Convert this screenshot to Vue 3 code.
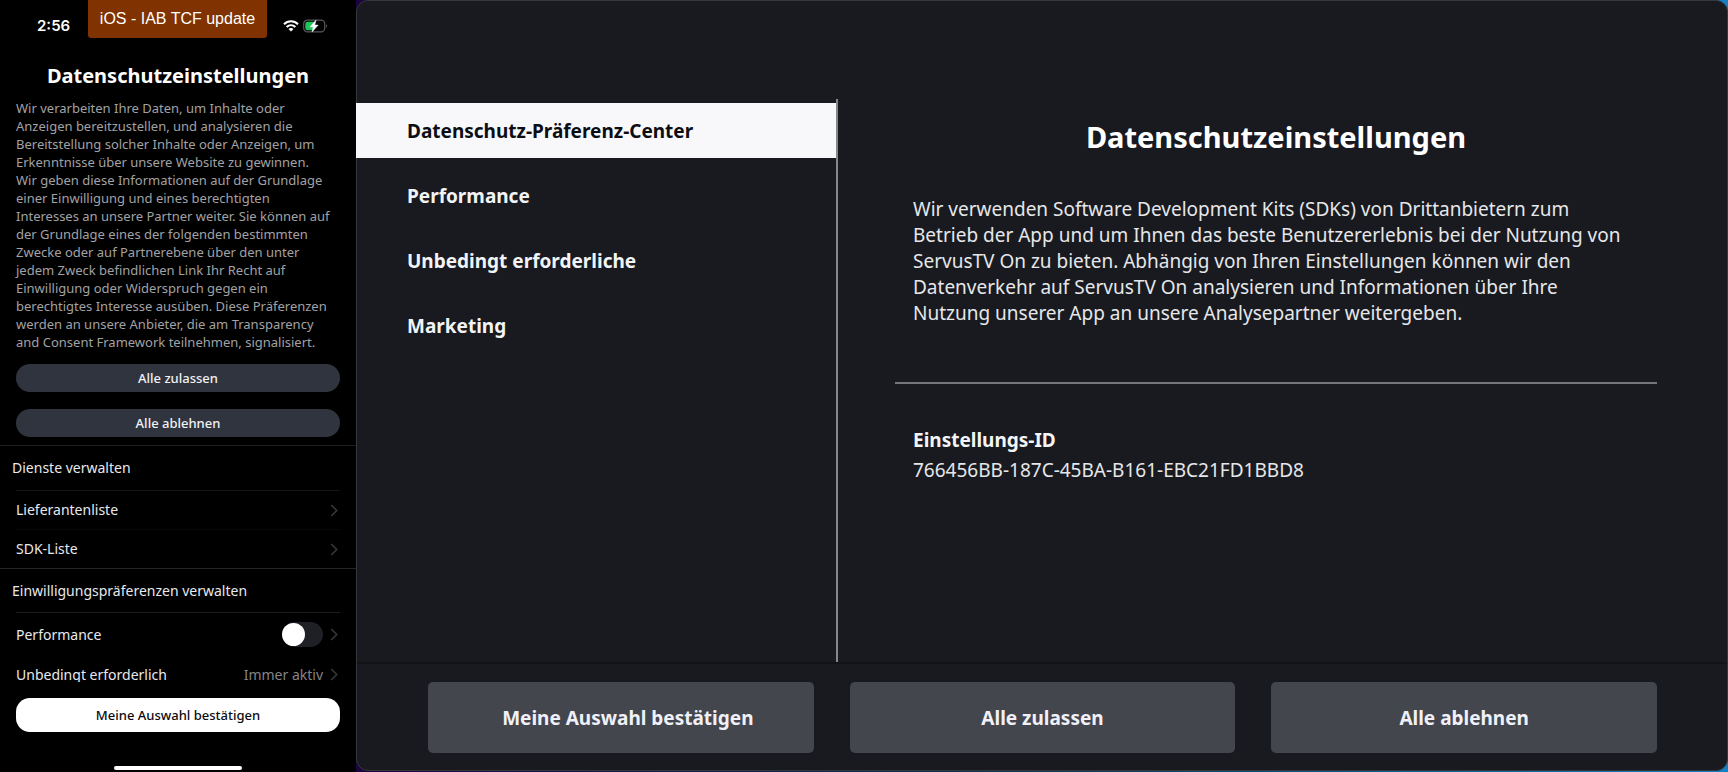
<script setup>
import { ref } from 'vue'

const phoneText = [
  'Wir verarbeiten Ihre Daten, um Inhalte oder',
  'Anzeigen bereitzustellen, und analysieren die',
  'Bereitstellung solcher Inhalte oder Anzeigen, um',
  'Erkenntnisse über unsere Website zu gewinnen.',
  'Wir geben diese Informationen auf der Grundlage',
  'einer Einwilligung und eines berechtigten',
  'Interesses an unsere Partner weiter. Sie können auf',
  'der Grundlage eines der folgenden bestimmten',
  'Zwecke oder auf Partnerebene über den unter',
  'jedem Zweck befindlichen Link Ihr Recht auf',
  'Einwilligung oder Widerspruch gegen ein',
  'berechtigtes Interesse ausüben. Diese Präferenzen',
  'werden an unsere Anbieter, die am Transparency',
  'and Consent Framework teilnehmen, signalisiert.',
]
const tvText = [
  'Wir verwenden Software Development Kits (SDKs) von Drittanbietern zum',
  'Betrieb der App und um Ihnen das beste Benutzererlebnis bei der Nutzung von',
  'ServusTV On zu bieten. Abhängig von Ihren Einstellungen können wir den',
  'Datenverkehr auf ServusTV On analysieren und Informationen über Ihre',
  'Nutzung unserer App an unsere Analysepartner weitergeben.',
]
const categories = ['Datenschutz-Präferenz-Center', 'Performance', 'Unbedingt erforderliche', 'Marketing']
const selected = ref(0)
const performance = ref(false)
</script>

<template>
  <div class="page">
    <section class="phone">
      <header class="status">
        <span class="time">2:56</span>
        <span class="badge">iOS - IAB TCF update</span>
        <span class="indicators">
          <svg width="16" height="12" viewBox="0 0 16 12" aria-hidden="true">
            <g fill="none" stroke="#fff" stroke-width="2">
              <path d="M1 4.2C5 .3 11 .3 15 4.2" />
              <path d="M3.6 7C6.2 4.5 9.800 4.500 12.400 7" />
            </g>
            <path d="M5.500 9C7 7.700 9 7.700 10.500 9L8 11.600Z" fill="#fff" />
          </svg>
          <svg width="25" height="14" viewBox="0 0 25 14" aria-hidden="true">
            <rect x=".7" y="1.200" width="21" height="11.600" rx="3.600" fill="none" stroke="#55585c" stroke-width="1.200" />
            <path d="M4.500 2.800H11V11.200H4.500Q2.300 11.200 2.300 9V5Q2.300 2.800 4.500 2.800Z" fill="#1fc55a" />
            <path d="M23 5Q25 7 23 9Z" fill="#55585c" />
            <path d="M13 1L7 7.900H10.300L9 13L15.200 6.100H11.800Z" fill="#fff" stroke="#fff" stroke-width=".5" />
          </svg>
        </span>
      </header>

      <h1 class="phone-title">Datenschutzeinstellungen</h1>
      <p class="phone-text"><span v-for="line in phoneText" :key="line" class="line">{{ line }} </span></p>
      <div class="pills">
        <button type="button" class="pill">Alle zulassen</button>
        <button type="button" class="pill">Alle ablehnen</button>
      </div>

      <div class="list">
        <h2 class="group">Dienste verwalten</h2>
        <a href="#vendors" class="row faint">
          <span>Lieferantenliste</span>
          <svg class="chevron" viewBox="0 0 8 14"><path d="M1 1L7 7L1 13" /></svg>
        </a>
        <a href="#sdks" class="row">
          <span>SDK-Liste</span>
          <svg class="chevron" viewBox="0 0 8 14"><path d="M1 1L7 7L1 13" /></svg>
        </a>
        <h2 class="group second">Einwilligungspräferenzen verwalten</h2>
        <div class="row tall">
          <label for="perf">Performance</label>
          <input id="perf" v-model="performance" type="checkbox" role="switch" class="switch" />
          <svg class="chevron" viewBox="0 0 8 14"><path d="M1 1L7 7L1 13" /></svg>
        </div>
        <div class="row cut">
          <span>Unbedingt erforderlich</span>
          <span class="state">Immer aktiv</span>
          <svg class="chevron" viewBox="0 0 8 14"><path d="M1 1L7 7L1 13" /></svg>
        </div>
      </div>

      <footer class="phone-foot">
        <button type="button" class="confirm">Meine Auswahl bestätigen</button>
        <span class="home"></span>
      </footer>
    </section>

    <div class="backdrop">
      <section class="tv">
        <div class="tv-main">
          <nav class="menu">
            <button
              v-for="(name, i) in categories"
              :key="name"
              type="button"
              :class="['item', { active: i === selected }]"
              @click="selected = i"
            >{{ name }}</button>
          </nav>
          <article class="detail">
            <h1 class="tv-title">Datenschutzeinstellungen</h1>
            <p class="tv-text"><span v-for="line in tvText" :key="line" class="line">{{ line }} </span></p>
            <hr class="rule" />
            <h2 class="id-label">Einstellungs-ID</h2>
            <p class="id">766456BB-187C-45BA-B161-EBC21FD1BBD8</p>
          </article>
        </div>
        <footer class="actions">
          <button type="button" class="action first">Meine Auswahl bestätigen</button>
          <button type="button" class="action">Alle zulassen</button>
          <button type="button" class="action">Alle ablehnen</button>
        </footer>
      </section>
    </div>
  </div>
</template>

<style>
body {
  margin: 0;
  background: #000;
}
</style>

<style scoped>
.page {
  display: grid;
  grid-template-columns: 356px minmax(0, 1fr);
  min-height: 100vh;
  font-family: "Noto Sans", "Open Sans", sans-serif;
}
.page *,
.page {
  box-sizing: border-box;
}
h1,
h2,
p {
  margin: 0;
}
button {
  border: 0;
  font-family: inherit;
  cursor: pointer;
}
.line {
  display: block;
  white-space: nowrap;
}

/* Phone */
.phone {
  display: flex;
  flex-direction: column;
  background: #000;
  color: #e8e9ec;
}
.status {
  display: grid;
  grid-template-columns: 88px 179px 1fr;
  height: 52px;
}
.time {
  padding-left: 37px;
  font: 600 15px/52px Inter, sans-serif;
  color: #fff;
}
.badge {
  height: 38px;
  border-radius: 0 0 3px 3px;
  background: #803300;
  color: #fff;
  font: 16px/38px "Liberation Sans", Arial, sans-serif;
  text-align: center;
}
.indicators {
  display: flex;
  align-items: center;
  gap: 4px;
  padding-left: 16px;
}
.phone-title {
  margin-top: 10px;
  color: #fff;
  font-size: 20px;
  line-height: 28px;
  text-align: center;
}
.phone-text {
  margin: 9px 16px 0;
  color: #a2a2a4;
  font-size: 13px;
  line-height: 18px;
}
.pills {
  display: flex;
  flex-direction: column;
  gap: 17px;
  margin: 13px 16px 8px;
}
.pill {
  height: 28px;
  padding: 0;
  border-radius: 14px;
  background: #30343e;
  color: #f0f1f4;
  font-size: 13px;
  font-weight: 500;
}
.list {
  border-top: 1px solid #1d1d1f;
}
.group {
  padding: 0 12px;
  font-size: 14px;
  font-weight: 400;
  line-height: 44px;
}
.second {
  border-top: 1px solid #252527;
  line-height: 43px;
}
.row {
  display: flex;
  align-items: center;
  height: 39px;
  margin: 0 16px;
  padding-right: 2px;
  border-top: 1px solid #151517;
  color: inherit;
  font-size: 14px;
  line-height: 20px;
  text-decoration: none;
}
.row > :first-child {
  margin-right: auto;
}
.faint + .row {
  border-top-color: #080809;
}
.tall {
  height: 44px;
  border-top-color: #1d1d1f;
}
.cut {
  align-items: flex-start;
  height: 26px;
  padding-top: 9px;
  border: 0;
  overflow: hidden;
}
.cut .chevron {
  margin-top: 3px;
}
.state {
  color: #848487;
}
.chevron {
  width: 8px;
  height: 13px;
  margin-left: 7px;
  fill: none;
  stroke: #3b3b3e;
  stroke-width: 1.5;
}
.switch {
  appearance: none;
  display: flex;
  align-items: center;
  width: 41px;
  height: 25px;
  margin: 0;
  border-radius: 13px;
  background: #1f1f26;
}
.switch::before {
  content: "";
  width: 23px;
  height: 23px;
  border-radius: 50%;
  background: #fff;
}
.switch:checked {
  justify-content: flex-end;
  background: #2fae58;
}
.phone-foot {
  display: flex;
  flex: 1;
  flex-direction: column;
  align-items: center;
  justify-content: space-between;
  padding: 16px 16px 2px;
}
.confirm {
  width: 100%;
  height: 34px;
  border-radius: 14px;
  background: #fff;
  color: #0b0b10;
  font-size: 13px;
  font-weight: 500;
}
.home {
  width: 128px;
  height: 4px;
  border-radius: 2px;
  background: #fff;
}

/* TV */
.backdrop {
  display: flex;
  padding-bottom: 1px;
  background: linear-gradient(90deg, #1b0440, #0b3a52 50%, #1280c4);
}
.tv {
  display: flex;
  flex: 1;
  flex-direction: column;
  min-width: 0;
  border: 1px solid #35373c;
  border-radius: 12px;
  background: #181a1f;
  color: #e6e7ea;
}
.tv-main {
  display: grid;
  flex: 1;
  grid-template-columns: 481px minmax(0, 1fr);
  padding-top: 98px;
}
.menu {
  display: flex;
  flex-direction: column;
  gap: 10px;
  margin-left: -1px;
  padding-top: 4px;
  border-right: 2px solid #85878b;
}
.item {
  height: 55px;
  padding: 0 0 0 51px;
  background: none;
  color: #f2f3f6;
  font-size: 19px;
  font-weight: 700;
  text-align: left;
}
.active {
  background: #f8f8fa;
  color: #0c0e14;
}
.detail {
  padding: 18px 70px 0 57px;
}
.tv-title {
  color: #fff;
  font-size: 29px;
  line-height: 40px;
  text-align: center;
}
.tv-text {
  padding: 39px 18px 0;
  font-size: 19px;
  line-height: 26px;
}
.rule {
  height: 2px;
  margin: 56px 0 41px;
  border: 0;
  background: #74767a;
}
.id-label,
.id {
  padding: 0 18px;
  font-size: 19px;
  line-height: 30px;
}
.id-label {
  color: #f4f5f8;
}
.actions {
  display: grid;
  grid-template-columns: repeat(3, 1fr);
  gap: 36px;
  padding: 18px 70px 17px 71px;
  border-top: 2px solid #111317;
}
.action {
  height: 71px;
  padding: 0;
  border-radius: 5px;
  background: #44464e;
  color: #f0f1f8;
  font-size: 19px;
  font-weight: 700;
}
.first {
  padding-left: 14px;
}
</style>
